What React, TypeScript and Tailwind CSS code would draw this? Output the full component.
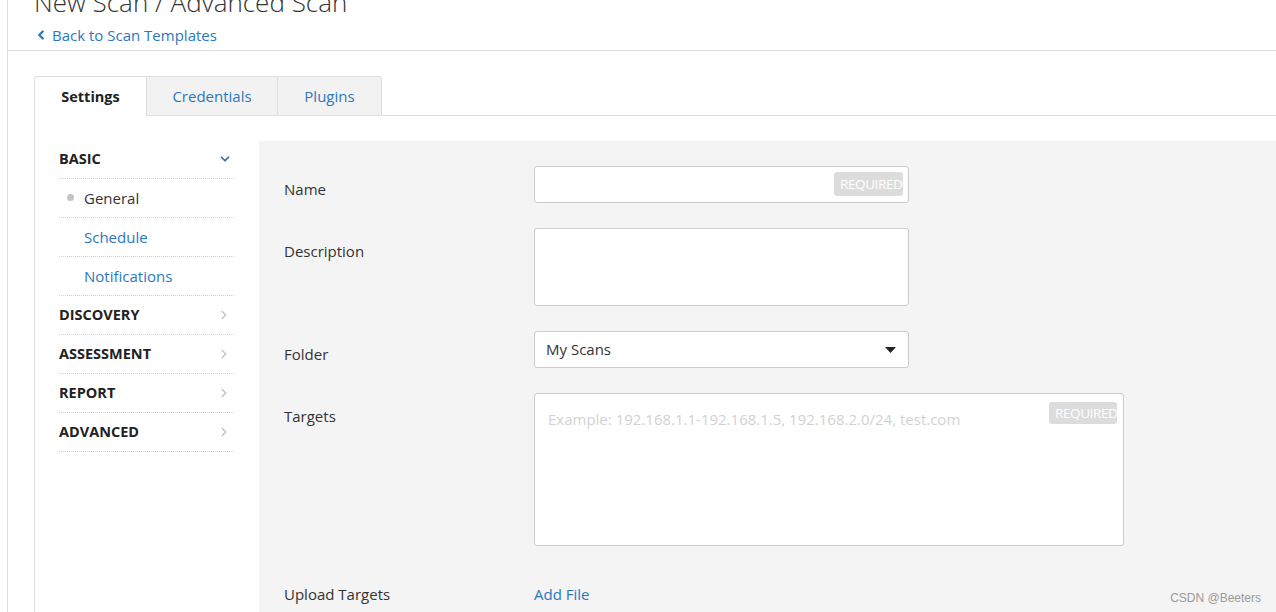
import { ChevronDown, ChevronLeft, ChevronRight } from "lucide-react";

const font = { fontFamily: '"Open Sans", "Noto Sans", sans-serif' };

type NavItem = { label: string; open?: boolean; children?: { label: string; active?: boolean }[] };

const nav: NavItem[] = [
  {
    label: "BASIC",
    open: true,
    children: [{ label: "General", active: true }, { label: "Schedule" }, { label: "Notifications" }],
  },
  { label: "DISCOVERY" },
  { label: "ASSESSMENT" },
  { label: "REPORT" },
  { label: "ADVANCED" },
];

function Required({ className }: { className: string }) {
  return (
    <div className={`absolute overflow-hidden rounded-[3px] bg-[#dcdcdc] ${className}`}>
      <span className="block whitespace-nowrap pl-[6px] text-[13.5px] tracking-[-0.4px] text-white">REQUIRED</span>
    </div>
  );
}

function Row({ label, children }: { label: string; children: React.ReactNode }) {
  return (
    <div className="flex">
      <div className="w-[250px] shrink-0 pt-[13px] text-[15px] leading-[20px] text-[#333]">{label}</div>
      <div>{children}</div>
    </div>
  );
}

export default function App() {
  return (
    <div className="relative h-[612px] w-full overflow-hidden bg-white" style={font}>
      <div className="ml-[7px] h-full border-l border-[#dedede]">
        {/* header */}
        <div className="flex h-[51px] flex-col border-b border-[#dedede] pl-[26px]">
          <h1 className="-mt-[15px] text-[26px] font-light leading-[34px] text-[#333]">
            New Scan / Advanced Scan
          </h1>
          <a className="mt-[6px] flex items-center gap-[4px] text-[15px] leading-[20px] text-[#2b78c0]">
            <ChevronLeft className="h-[14px] w-[14px]" strokeWidth={4} />
            Back to Scan Templates
          </a>
        </div>

        {/* tabs */}
        <div className="mt-[25px] flex pl-[26px]">
          <div className="flex h-[40px] w-[112px] items-center justify-center rounded-tl-[3px] border-l border-t border-[#dedede] bg-white text-[14.5px] font-bold text-[#222]">
            Settings
          </div>
          <div className="flex h-[40px] w-[131px] items-center justify-center border-b border-l border-t border-[#dedede] bg-[#f2f2f2] text-[15px] text-[#2b78c0]">
            Credentials
          </div>
          <div className="flex h-[40px] w-[105px] items-center justify-center rounded-tr-[3px] border border-[#dedede] bg-[#f2f2f2] text-[15px] text-[#2b78c0]">
            Plugins
          </div>
          <div className="flex-1 border-b border-[#dedede]" />
        </div>

        {/* body */}
        <div className="ml-[26px] flex h-full border-l border-[#dedede] pt-[25px]">
          <div className="-mt-[1px] ml-[24px] w-[175px] shrink-0">
            {nav.map((item) => (
              <div key={item.label}>
                <div className="flex h-[39px] items-center justify-between border-b border-dotted border-[#d0d0d0] text-[14.5px] font-bold text-[#222]">
                  {item.label}
                  {item.open ? (
                    <ChevronDown className="mr-[2px] h-[14px] w-[14px] text-[#3d6b99]" strokeWidth={3} />
                  ) : (
                    <ChevronRight className="mr-[3px] h-[14px] w-[14px] text-[#c8c8c8]" strokeWidth={3} />
                  )}
                </div>
                {item.children?.map((c) => (
                  <div
                    key={c.label}
                    className={`relative flex h-[39px] items-center border-b border-dotted border-[#d0d0d0] pl-[25px] text-[15px] ${
                      c.active ? "text-[#333]" : "text-[#2b78c0]"
                    }`}
                  >
                    {c.active && <span className="absolute left-[8px] top-[15px] h-[7px] w-[7px] rounded-full bg-[#c4c4c4]" />}
                    {c.label}
                  </div>
                ))}
              </div>
            ))}
          </div>

          <div className="ml-[25px] flex-1 bg-[#f4f4f4] pl-[25px] pt-[25px]">
            <div className="flex flex-col gap-[25px]">
              <Row label="Name">
                <div className="relative h-[37px] w-[375px] rounded-[3px] border border-[#cccccc] bg-white">
                  <Required className="right-[5px] top-[5px] h-[24px] w-[69px] leading-[24px]" />
                </div>
              </Row>
              <Row label="Description">
                <div className="h-[78px] w-[375px] rounded-[3px] border border-[#cccccc] bg-white" />
              </Row>
              <Row label="Folder">
                <div className="flex h-[37px] w-[375px] items-center justify-between rounded-[3px] border border-[#cccccc] bg-white pl-[11px] pr-[12px] text-[15px] text-[#333]">
                  My Scans
                  <svg width="11" height="6" viewBox="0 0 11 6">
                    <path d="M0 0h11L5.5 6z" fill="#222" />
                  </svg>
                </div>
              </Row>
              <Row label="Targets">
                <div className="relative h-[153px] w-[590px] rounded-[3px] border border-[#cccccc] bg-white px-[13px] pt-[15px] text-[15px] leading-[20px] text-[#d2d2d2]">
                  Example: 192.168.1.1-192.168.1.5, 192.168.2.0/24, test.com
                  <Required className="right-[6px] top-[8px] h-[22px] w-[68px] leading-[22px]" />
                </div>
              </Row>
              <Row label="Upload Targets">
                <div className="pt-[13px] text-[15px] leading-[20px] text-[#2b78c0]">Add File</div>
              </Row>
            </div>
          </div>
        </div>
      </div>

      <div
        className="absolute right-[15px] top-[589px] text-[12px] text-[#9a9a9a]"
        style={{ fontFamily: '"Liberation Sans", Arial, sans-serif' }}
      >
        CSDN @Beeters
      </div>
    </div>
  );
}
